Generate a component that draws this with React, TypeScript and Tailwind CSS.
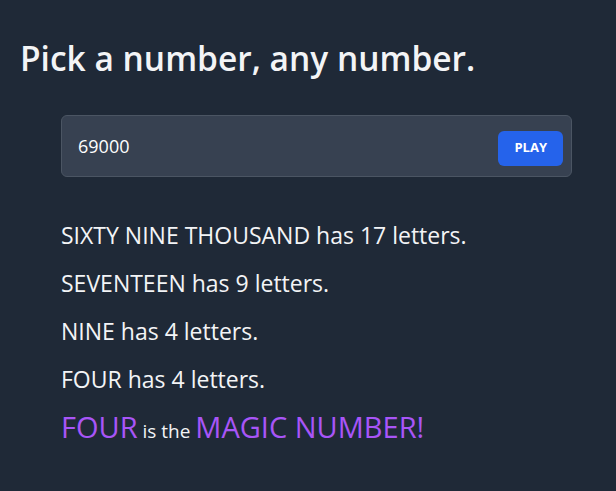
import React, { useState } from 'react';

const FONT = { fontFamily: '"Open Sans", "Noto Sans", sans-serif' };

function toWords(n: number): string {
  const ones = ['ZERO', 'ONE', 'TWO', 'THREE', 'FOUR', 'FIVE', 'SIX', 'SEVEN', 'EIGHT', 'NINE', 'TEN', 'ELEVEN', 'TWELVE', 'THIRTEEN', 'FOURTEEN', 'FIFTEEN', 'SIXTEEN', 'SEVENTEEN', 'EIGHTEEN', 'NINETEEN'];
  const tens = ['', '', 'TWENTY', 'THIRTY', 'FORTY', 'FIFTY', 'SIXTY', 'SEVENTY', 'EIGHTY', 'NINETY'];
  const under1000 = (x: number): string => {
    const parts: string[] = [];
    if (x >= 100) {
      parts.push(ones[Math.floor(x / 100)], 'HUNDRED');
      x %= 100;
    }
    if (x >= 20) {
      parts.push(tens[Math.floor(x / 10)]);
      if (x % 10) parts.push(ones[x % 10]);
    } else if (x > 0) {
      parts.push(ones[x]);
    }
    return parts.join(' ');
  };
  if (n === 0) return 'ZERO';
  const out: string[] = [];
  if (n >= 1000000) {
    out.push(under1000(Math.floor(n / 1000000)), 'MILLION');
    n %= 1000000;
  }
  if (n >= 1000) {
    out.push(under1000(Math.floor(n / 1000)), 'THOUSAND');
    n %= 1000;
  }
  if (n > 0) out.push(under1000(n));
  return out.join(' ');
}

// walk the letter counts until we land on four
function chain(n: number) {
  const steps: { word: string; count: number }[] = [];
  let cur = n;
  for (let i = 0; i < 20; i++) {
    const word = toWords(cur);
    const count = word.replace(/[^A-Z]/g, '').length;
    steps.push({ word, count });
    if (cur === 4) break;
    cur = count;
  }
  return steps;
}

export default function App() {
  const [value, setValue] = useState('69000');
  const [num, setNum] = useState(69000);
  const steps = chain(num);

  return (
    <div className="min-h-screen bg-[#1f2937] text-gray-100 px-5 pt-[38px]" style={FONT}>
      <h1 className="text-[33.5px] leading-10 font-semibold">Pick a number, any number.</h1>

      <div className="ml-[41px] mr-[24px] mt-[37px]">
        <div className="flex items-center h-[62px] bg-[#374151] border border-[#4b5563] rounded-md pl-4 pr-2">
          <input
            className="flex-1 bg-transparent outline-none text-[18px] text-white"
            style={FONT}
            value={value}
            onChange={(e) => setValue(e.target.value)}
          />
          <button
            className="h-[35px] px-4 mt-1 rounded-md bg-[#2563eb] text-white text-[13px] font-bold"
            style={FONT}
            onClick={() => setNum(parseInt(value, 10) || 0)}
          >
            PLAY
          </button>
        </div>

        <div className="mt-[44px] flex flex-col gap-[20px] text-[23px] leading-7">
          {steps.map((s, i) => (
            <p key={i}>
              {s.word} has {s.count} letters.
            </p>
          ))}
          <p className="leading-7">
            <span className="text-[29px] text-[#a855f7]">FOUR</span>
            <span className="text-[19px]"> is the </span>
            <span className="text-[29px] text-[#a855f7]">MAGIC NUMBER!</span>
          </p>
        </div>
      </div>
    </div>
  );
}
